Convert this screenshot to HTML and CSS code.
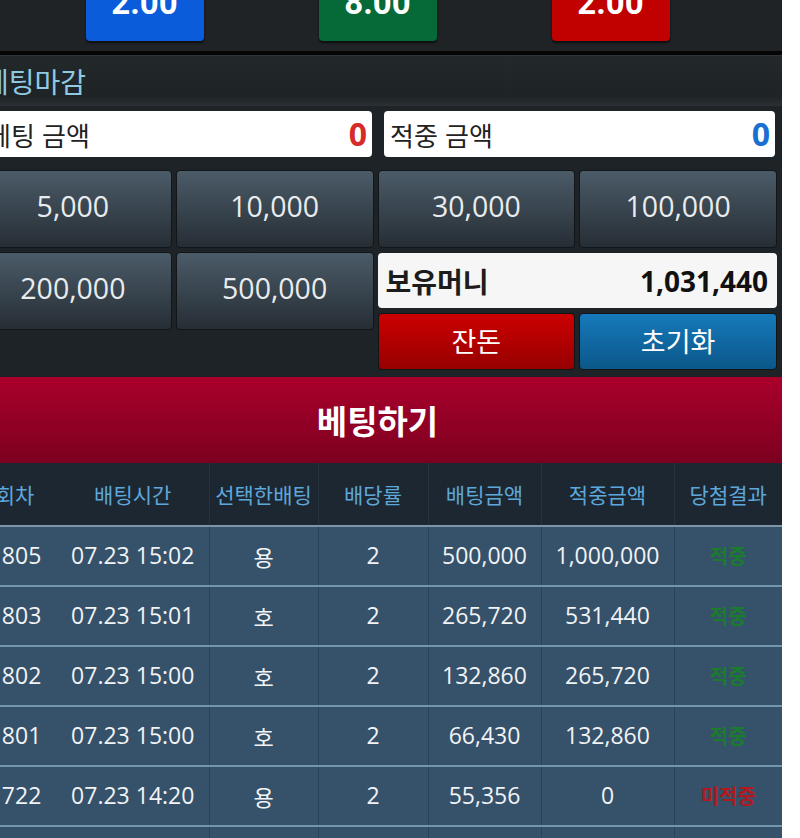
FILE: index.html
```html
<!DOCTYPE html>
<html lang="ko">
<head>
<meta charset="utf-8">
<title>베팅</title>
<link rel="stylesheet" href="styles.css">
</head>
<body>
<div class="page">
  <div class="odds">
    <div class="odd odd-blue">2.00</div>
    <div class="odd odd-green">8.00</div>
    <div class="odd odd-red">2.00</div>
  </div>
  <div class="status">베팅마감</div>
  <div class="amounts">
    <div class="amt"><span class="amt-label">베팅 금액</span><span class="amt-val amt-red">0</span></div>
    <div class="amt"><span class="amt-label">적중 금액</span><span class="amt-val amt-blue">0</span></div>
  </div>
  <div class="chips">
    <button class="chip">5,000</button>
    <button class="chip">10,000</button>
    <button class="chip">30,000</button>
    <button class="chip">100,000</button>
    <button class="chip">200,000</button>
    <button class="chip">500,000</button>
    <div class="side">
      <div class="money"><span class="money-label">보유머니</span><span class="money-val">1,031,440</span></div>
      <div class="actions">
        <button class="act act-red">잔돈</button>
        <button class="act act-blue">초기화</button>
      </div>
    </div>
  </div>
  <button class="bet">베팅하기</button>
  <table class="history">
    <colgroup>
      <col class="c-a"><col class="c-b"><col class="c-c"><col class="c-d"><col class="c-e"><col class="c-f"><col class="c-g">
    </colgroup>
    <thead>
      <tr><th>회차</th><th>배팅시간</th><th>선택한배팅</th><th>배당률</th><th>배팅금액</th><th>적중금액</th><th>당첨결과</th></tr>
    </thead>
    <tbody>
      <tr><td class="first">1805</td><td>07.23 15:02</td><td class="pick">용</td><td>2</td><td>500,000</td><td>1,000,000</td><td class="res win">적중</td></tr>
      <tr><td class="first">1803</td><td>07.23 15:01</td><td class="pick">호</td><td>2</td><td>265,720</td><td>531,440</td><td class="res win">적중</td></tr>
      <tr><td class="first">1802</td><td>07.23 15:00</td><td class="pick">호</td><td>2</td><td>132,860</td><td>265,720</td><td class="res win">적중</td></tr>
      <tr><td class="first">1801</td><td>07.23 15:00</td><td class="pick">호</td><td>2</td><td>66,430</td><td>132,860</td><td class="res win">적중</td></tr>
      <tr><td class="first">1722</td><td>07.23 14:20</td><td class="pick">용</td><td>2</td><td>55,356</td><td>0</td><td class="res lose">미적중</td></tr>
      <tr><td class="first">1721</td><td>07.23 14:19</td><td class="pick">호</td><td>2</td><td>46,130</td><td>92,260</td><td class="res win">적중</td></tr>
    </tbody>
  </table>
</div>
</body>
</html>
```

FILE: styles.css
```css
html, body {
  margin: 0;
  padding: 0;
  background: #ffffff;
  overflow: hidden;
}

body {
  font-family: "Open Sans", "Noto Sans CJK KR", sans-serif;
}

.page {
  margin-left: -27px;
  width: 809px;
  background: #1e2327;
  height: 900px;
}

/* odds buttons */
.odds {
  margin-top: -30px;
  height: 81px;
  border-bottom: 4px solid #050505;
  background: #1f2326;
  display: flex;
  justify-content: center;
  gap: 115px;
  align-items: flex-start;
}

.odd {
  width: 118px;
  height: 71px;
  box-sizing: border-box;
  padding-top: 16px;
  border-radius: 0 0 4px 4px;
  text-align: center;
  font-family: Roboto, "Liberation Sans", sans-serif;
  font-weight: 700;
  font-size: 33px;
  line-height: 33px;
  color: #ffffff;
  box-shadow: 0 2px 2px rgba(0, 0, 0, 0.6);
}

.odd-blue { background: #0b5cda; }
.odd-green { background: #056a37; }
.odd-red { background: #c10000; }

/* status */
.status {
  height: 50px;
  line-height: 50px;
  padding-left: 10px;
  background: linear-gradient(#23282b, #1e2326 80%, #2a3035);
  border-top: 1px solid #2e3438;
  font-family: "Noto Sans CJK KR", sans-serif;
  font-size: 28px;
  color: #8ecae3;
}

/* amounts */
.amounts {
  display: flex;
  gap: 12px;
  padding: 5px 7px 0 8px;
}

.amt {
  flex: 1;
  height: 46px;
  background: #ffffff;
  border-radius: 4px;
  display: flex;
  align-items: center;
  justify-content: space-between;
  padding: 0 5px 0 6px;
}

.amt-label {
  font-family: "Noto Sans CJK KR", sans-serif;
  font-size: 26px;
  color: #222222;
}

.amt-val {
  font-family: "Open Sans", sans-serif;
  font-weight: 700;
  font-size: 32px;
  line-height: 1;
}

.amt-red { color: #d62b2b; }
.amt-blue { color: #1b6fd2; }

/* chips */
.chips {
  margin-top: 13px;
  padding: 0 5px 0 1px;
  display: grid;
  grid-template-columns: repeat(4, 1fr);
  grid-template-rows: 78px auto;
  gap: 4px;
  align-items: start;
}

.chip {
  height: 78px;
  margin: 0;
  padding: 0 0 7px 0;
  border: 1px solid #121618;
  border-radius: 4px;
  background: linear-gradient(#4b5b68, #262e35);
  color: #e9ecee;
  font-family: "Open Sans", sans-serif;
  font-size: 28.5px;
  cursor: pointer;
}

.side {
  grid-column: 3 / span 2;
  display: flex;
  flex-direction: column;
  gap: 5px;
  padding-top: 1px;
}

.money {
  height: 55px;
  background: #f6f6f6;
  border-radius: 4px;
  display: flex;
  align-items: center;
  justify-content: space-between;
  padding: 0 9px 0 8px;
}

.money-label {
  font-family: "Noto Sans CJK KR", sans-serif;
  font-weight: 700;
  font-size: 28px;
  color: #1c1c1c;
}

.money-val {
  font-family: "Open Sans", sans-serif;
  font-weight: 700;
  font-size: 28px;
  color: #111111;
}

.actions {
  display: grid;
  grid-template-columns: 1fr 1fr;
  gap: 4px;
}

.act {
  height: 57px;
  margin: 0;
  padding: 0 0 3px 0;
  border: 1px solid #111518;
  border-radius: 4px;
  color: #ffffff;
  font-family: "Noto Sans CJK KR", sans-serif;
  font-size: 27px;
  cursor: pointer;
}

.act-red { background: linear-gradient(#cc0000, #970000); }
.act-blue { background: linear-gradient(#1679bb, #0b5789); }

/* bet bar */
.bet {
  display: block;
  width: 100%;
  height: 86px;
  margin: 7px 0 0 0;
  border: none;
  background: linear-gradient(#aa002b, #7c0020);
  color: #ffffff;
  font-family: "Noto Sans CJK KR", sans-serif;
  font-weight: 700;
  font-size: 33px;
  cursor: pointer;
}

/* history table */
.history {
  width: 809px;
  border-collapse: collapse;
  table-layout: fixed;
}

.c-a { width: 84px; }
.c-b { width: 152px; }
.c-c { width: 109px; }
.c-d { width: 110px; }
.c-e { width: 113px; }
.c-f { width: 133px; }
.c-g { width: 108px; }

.history th {
  height: 62px;
  padding: 0;
  background: #1c2731;
  border-left: 1px solid #27333d;
  border-bottom: 2px solid #7d95a6;
  font-family: "Noto Sans CJK KR", sans-serif;
  font-weight: 400;
  font-size: 21px;
  color: #5ea7da;
  text-align: center;
}

.history th:first-child,
.history th:nth-child(2) {
  border-left: none;
}

.history td {
  height: 58px;
  padding: 0;
  background: #36516a;
  border-left: 1px solid #2a4259;
  border-bottom: 2px solid #7395ad;
  font-family: "Open Sans", "Noto Sans CJK KR", sans-serif;
  font-size: 23px;
  line-height: 1.2;
  color: #f1f3f5;
  text-align: center;
  white-space: nowrap;
}

.history td.first,
.history td:nth-child(2) {
  border-left: none;
}

.history td.pick {
  font-family: "Noto Sans CJK KR", sans-serif;
  font-size: 22px;
}

.history td.res {
  font-family: "Noto Sans CJK KR", sans-serif;
  font-weight: 700;
  font-size: 20px;
}

.history td.win { color: #1b7c2d; }
.history td.lose { color: #b2191f; }
```
